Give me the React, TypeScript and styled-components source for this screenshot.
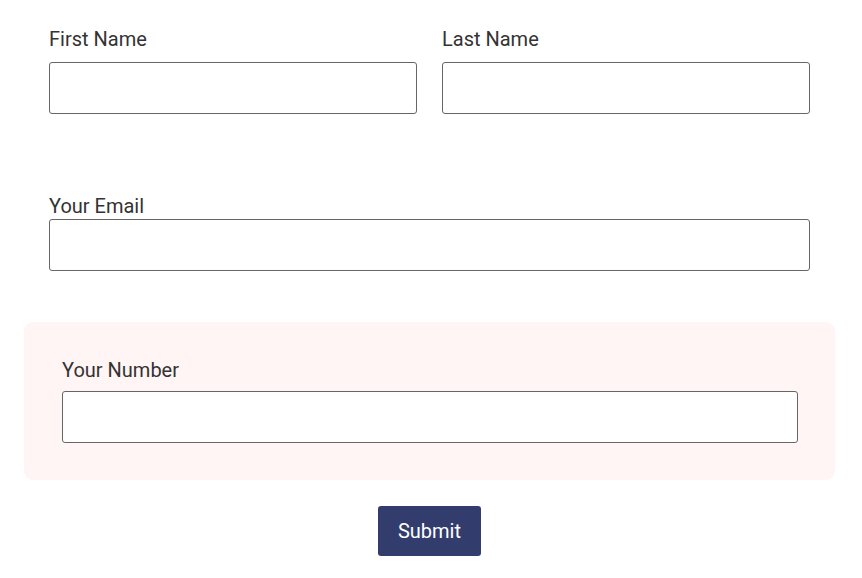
import React from "react";
import styled, { createGlobalStyle } from "styled-components";

const Global = createGlobalStyle`
  html, body { margin: 0; padding: 0; background: #ffffff; }
  body { font-family: Roboto, "Liberation Sans", Arial, sans-serif; color: #333333; }
  * { box-sizing: border-box; }
`;

const Form = styled.form`
  width: 862px;
  padding: 28px 52px 0 49px;
  display: flex;
  flex-direction: column;
`;

const Row = styled.div`
  display: grid;
  grid-template-columns: 1fr 1fr;
  column-gap: 25px;
`;

const Field = styled.div<{ $gap: number }>`
  display: flex;
  flex-direction: column;
  gap: ${(p) => p.$gap}px;
`;

const Label = styled.label`
  font-size: 20px;
  line-height: 23px;
  color: #333333;
`;

const Input = styled.input`
  height: 52px;
  width: 100%;
  border: 1px solid #666666;
  border-radius: 3px;
  background: #ffffff;
  font-size: 18px;
  padding: 0 12px;
  outline: none;
`;

const Spacer = styled.div<{ $h: number }>`
  height: ${(p) => p.$h}px;
`;

const Highlight = styled.div`
  margin: 0 -25px;
  background: #fff5f5;
  border-radius: 9px;
  padding: 37px 37px 37px 38px;
`;

const Actions = styled.div`
  display: flex;
  justify-content: center;
  padding-top: 26px;
`;

const Submit = styled.button`
  width: 103px;
  height: 50px;
  background: #323d6e;
  color: #ffffff;
  border: none;
  border-radius: 3px;
  font-family: Roboto, "Liberation Sans", Arial, sans-serif;
  font-size: 20px;
  cursor: pointer;
`;

export default function App() {
  return (
    <>
      <Global />
      <Form onSubmit={(e) => e.preventDefault()}>
        <Row>
          <Field $gap={11}>
            <Label>First Name</Label>
            <Input type="text" />
          </Field>
          <Field $gap={11}>
            <Label>Last Name</Label>
            <Input type="text" />
          </Field>
        </Row>
        <Spacer $h={81} />
        <Field $gap={1}>
          <Label>Your Email</Label>
          <Input type="email" />
        </Field>
        <Spacer $h={51} />
        <Highlight>
          <Field $gap={9}>
            <Label>Your Number</Label>
            <Input type="tel" />
          </Field>
        </Highlight>
        <Actions>
          <Submit type="submit">Submit</Submit>
        </Actions>
      </Form>
    </>
  );
}
